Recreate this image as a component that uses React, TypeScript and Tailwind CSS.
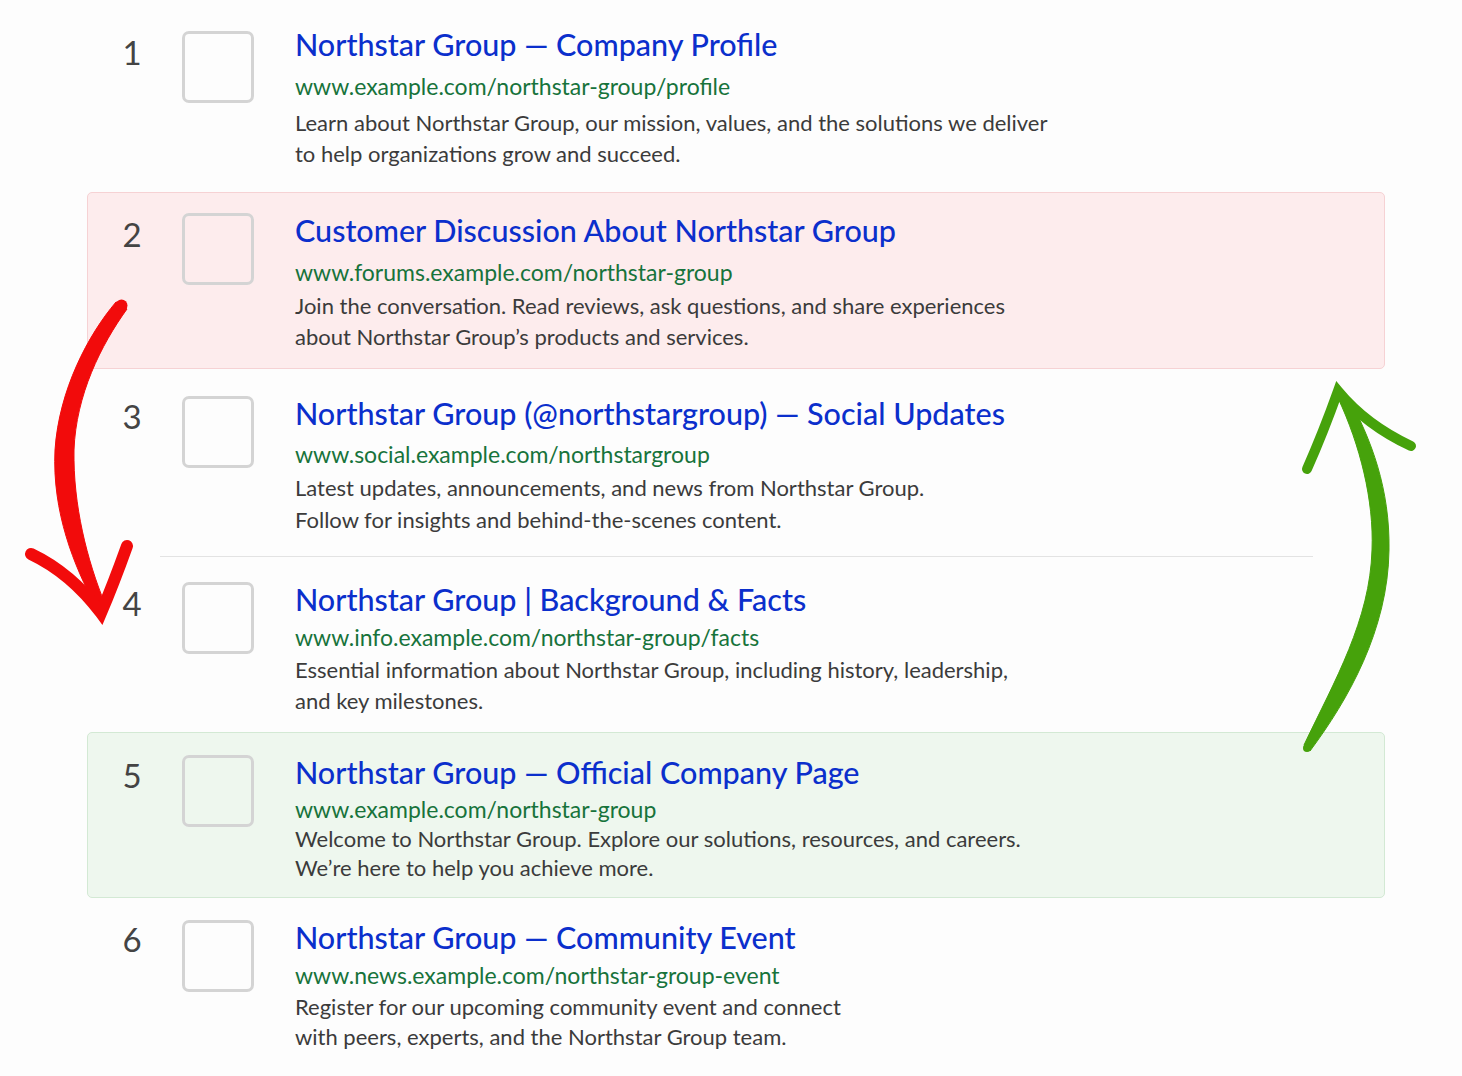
import React from "react";

type Result = {
  n: number;
  title: string;
  url: string;
  desc: [string, string];
  tone: "plain" | "red" | "green";
  pt: string;
  h: string;
  cb: string;
  num: string;
  urlMt: string;
  descMt: string;
  descLh: string;
};

const results: Result[] = [
  {
    n: 1,
    title: "Northstar Group — Company Profile",
    url: "www.example.com/northstar-group/profile",
    desc: [
      "Learn about Northstar Group, our mission, values, and the solutions we deliver",
      "to help organizations grow and succeed.",
    ],
    tone: "plain",
    pt: "pt-[25px]",
    h: "h-[192px]",
    cb: "mt-[5px]",
    num: "mt-[10px]",
    urlMt: "mt-[11px]",
    descMt: "mt-[8px]",
    descLh: "leading-[31px]",
  },
  {
    n: 2,
    title: "Customer Discussion About Northstar Group",
    url: "www.forums.example.com/northstar-group",
    desc: [
      "Join the conversation. Read reviews, ask questions, and share experiences",
      "about Northstar Group’s products and services.",
    ],
    tone: "red",
    pt: "pt-[19px]",
    h: "h-[177px]",
    cb: "mt-[1px]",
    num: "mt-[6px]",
    urlMt: "mt-[11px]",
    descMt: "mt-[5px]",
    descLh: "leading-[31px]",
  },
  {
    n: 3,
    title: "Northstar Group (@northstargroup) — Social Updates",
    url: "www.social.example.com/northstargroup",
    desc: [
      "Latest updates, announcements, and news from Northstar Group.",
      "Follow for insights and behind-the-scenes content.",
    ],
    tone: "plain",
    pt: "pt-[25px]",
    h: "h-[187px]",
    cb: "mt-[1px]",
    num: "mt-[5px]",
    urlMt: "mt-[10px]",
    descMt: "mt-[5px]",
    descLh: "leading-[32px]",
  },
  {
    n: 4,
    title: "Northstar Group | Background & Facts",
    url: "www.info.example.com/northstar-group/facts",
    desc: [
      "Essential information about Northstar Group, including history, leadership,",
      "and key milestones.",
    ],
    tone: "plain",
    pt: "pt-[23px]",
    h: "h-[175px]",
    cb: "mt-[1px]",
    num: "mt-[6px]",
    urlMt: "mt-[7px]",
    descMt: "mt-[4px]",
    descLh: "leading-[31px]",
  },
  {
    n: 5,
    title: "Northstar Group — Official Company Page",
    url: "www.example.com/northstar-group",
    desc: [
      "Welcome to Northstar Group. Explore our solutions, resources, and careers.",
      "We’re here to help you achieve more.",
    ],
    tone: "green",
    pt: "pt-[21px]",
    h: "h-[166px]",
    cb: "mt-[1px]",
    num: "mt-[5px]",
    urlMt: "mt-[6px]",
    descMt: "mt-[2px]",
    descLh: "leading-[29px]",
  },
  {
    n: 6,
    title: "Northstar Group — Community Event",
    url: "www.news.example.com/northstar-group-event",
    desc: [
      "Register for our upcoming community event and connect",
      "with peers, experts, and the Northstar Group team.",
    ],
    tone: "plain",
    pt: "pt-[20px]",
    h: "h-[178px]",
    cb: "mt-[1px]",
    num: "mt-[4px]",
    urlMt: "mt-[7px]",
    descMt: "mt-[4px]",
    descLh: "leading-[30px]",
  },
];

const toneClass: Record<Result["tone"], string> = {
  plain: "border border-transparent",
  red: "border border-[#f6d2d4] bg-[#fdeced] rounded-[5px]",
  green: "border border-[#d3e9d4] bg-[#eef7ee] rounded-[5px]",
};

function Row({ r }: { r: Result }) {
  return (
    <div className={`flex items-start ${r.pt} ${r.h} ${toneClass[r.tone]}`}>
      <div
        className={`w-[88px] shrink-0 text-center text-[33px] leading-none text-[#444444] ${r.num}`}
      >
        {r.n}
      </div>
      <div
        className={`ml-[6px] h-[72px] w-[72px] shrink-0 rounded-[7px] border-[3px] border-[#d4d4d4] ${r.cb}`}
      />
      <div className="ml-[41px] flex flex-col">
        <div className="whitespace-nowrap text-[30.5px] font-medium leading-[36px] text-[#0b2fcc]">
          {r.title}
        </div>
        <div
          className={`whitespace-nowrap text-[23px] leading-[26px] text-[#17733b] ${r.urlMt}`}
        >
          {r.url}
        </div>
        <div className={`text-[22px] text-[#3b3b3b] ${r.descLh} ${r.descMt}`}>
          <div className="whitespace-nowrap">{r.desc[0]}</div>
          <div className="whitespace-nowrap">{r.desc[1]}</div>
        </div>
      </div>
    </div>
  );
}

function Arrows() {
  return (
    <svg
      className="pointer-events-none absolute left-0 top-0"
      width={1462}
      height={1076}
      viewBox="0 0 1462 1076"
    >
      {/* red arrow: moving down */}
      <g fill="#f20b0b" stroke="#f20b0b">
        <path
          d="M 116 302 C 88 335, 59 390, 55 450 C 52 512, 74 566, 96 607 L 105 604 C 87 560, 73 505, 74 450 C 76 395, 101 345, 127 309 Z"
          strokeWidth={1}
        />
        <circle cx={121.5} cy={305.5} r={6} strokeWidth={0} />
        <path
          d="M 31 554 Q 71 573 101 613 Q 113 585 127 546"
          fill="none"
          strokeWidth={12}
          strokeLinecap="round"
          strokeLinejoin="miter"
        />
      </g>
      {/* green arrow: moving up */}
      <g fill="#46a20b" stroke="#46a20b">
        <path
          d="M 1338 398 C 1360 445, 1374 500, 1372 550 C 1370 620, 1335 680, 1304 745 L 1310 751 C 1348 700, 1388 630, 1389 550 C 1390 490, 1372 440, 1347 395 Z"
          strokeWidth={1}
        />
        <circle cx={1307} cy={748} r={4} strokeWidth={0} />
        <path
          d="M 1307 469 Q 1323 433 1338 391 Q 1366 425 1411 446"
          fill="none"
          strokeWidth={10}
          strokeLinecap="round"
          strokeLinejoin="miter"
        />
      </g>
    </svg>
  );
}

export default function App() {
  return (
    <div
      className="relative h-[1076px] w-[1462px] overflow-hidden bg-[#fdfdfd]"
      style={{ fontFamily: "Lato, 'Open Sans', sans-serif" }}
    >
      <div className="ml-[87px] flex w-[1298px] flex-col">
        <Row r={results[0]} />
        <Row r={results[1]} />
        <Row r={results[2]} />
        <div className="ml-[73px] h-px w-[1153px] bg-[#e3e3e3]" />
        <Row r={results[3]} />
        <Row r={results[4]} />
        <Row r={results[5]} />
      </div>
      <Arrows />
    </div>
  );
}
